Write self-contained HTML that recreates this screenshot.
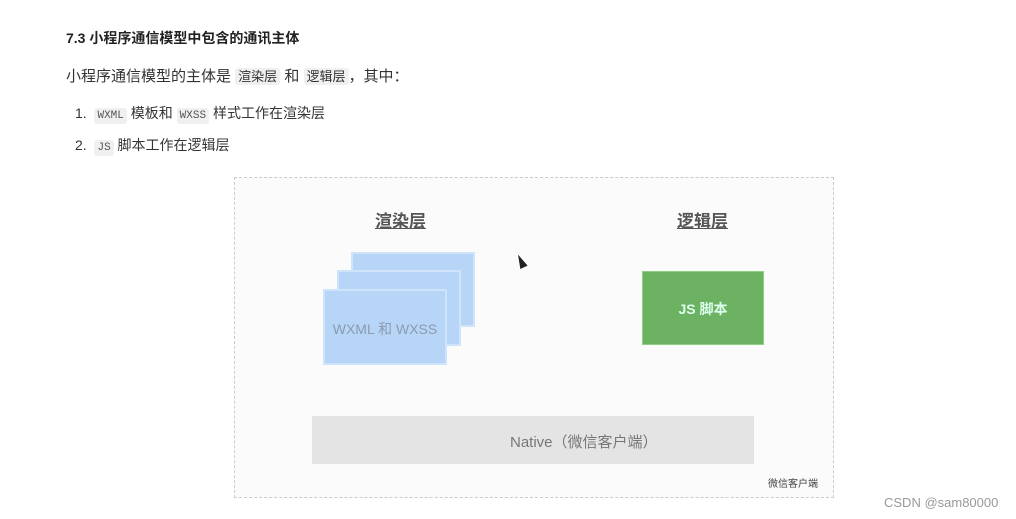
<!DOCTYPE html>
<html><head><meta charset="utf-8"><style>
body{margin:0;width:1016px;height:519px;background:#fff;position:relative;overflow:hidden;font-family:"Liberation Sans","Noto Sans CJK SC",sans-serif;color:#333}
.a{position:absolute;white-space:nowrap}
code{font-family:"Liberation Mono",monospace;font-size:11px;background:#f0f0f0;border-radius:3px;padding:2px 3px;color:#555}
.c{background:#f0f0f0;border-radius:3px;padding:1px 3px;font-size:13px}
.card{position:absolute;background:#b7d5f7;border:2px solid #cfe3fb;box-sizing:border-box}
</style></head><body>
<div class="a" style="left:66px;top:28px;font-size:14px;font-weight:bold;color:#222">7.3 小程序通信模型中包含的通讯主体</div>
<div class="a" style="left:66px;top:65px;font-size:15px">小程序通信模型的主体是 <span class="c">渲染层</span> 和 <span class="c">逻辑层</span>，其中：</div>
<div class="a" style="left:75px;top:103px;font-size:14px">1.&nbsp; <code>WXML</code> 模板和 <code>WXSS</code> 样式工作在渲染层</div>
<div class="a" style="left:75px;top:135px;font-size:14px">2.&nbsp; <code>JS</code> 脚本工作在逻辑层</div>
<div class="a" style="left:234px;top:177px;width:598px;height:319px;border:1px dashed #ccc;background:#fbfbfb"></div>
<div class="a" style="left:375px;top:207px;font-size:17px;font-weight:bold;color:#555;text-decoration:underline">渲染层</div>
<div class="a" style="left:677px;top:207px;font-size:17px;font-weight:bold;color:#555;text-decoration:underline">逻辑层</div>
<div class="card" style="left:351px;top:252px;width:124px;height:75px"></div>
<div class="card" style="left:337px;top:270px;width:124px;height:76px"></div>
<div class="card" style="left:323px;top:289px;width:124px;height:76px"></div>
<div class="a" style="left:323px;top:319px;width:124px;text-align:center;font-size:14px;color:#8a9bb0">WXML 和 WXSS</div>
<div class="a" style="left:642px;top:271px;width:122px;height:74px;background:#6db162;border:1px solid #8fd082;box-sizing:border-box"></div>
<div class="a" style="left:642px;top:299px;width:122px;text-align:center;font-size:14px;color:#dfe;font-weight:bold">JS 脚本</div>
<div class="a" style="left:312px;top:416px;width:442px;height:48px;background:#e4e4e4"></div>
<div class="a" style="left:510px;top:431px;font-size:15px;color:#777">Native（微信客户端）</div>
<div class="a" style="left:768px;top:475px;font-size:10px;color:#444">微信客户端</div>
<div class="a" style="left:517px;top:254px;width:0;height:0;border-left:4px solid transparent;border-right:4px solid transparent;border-bottom:14px solid #222;transform:rotate(-25deg)"></div>
<div class="a" style="left:884px;top:495px;font-size:13px;color:#999">CSDN @sam80000</div>
</body></html>
